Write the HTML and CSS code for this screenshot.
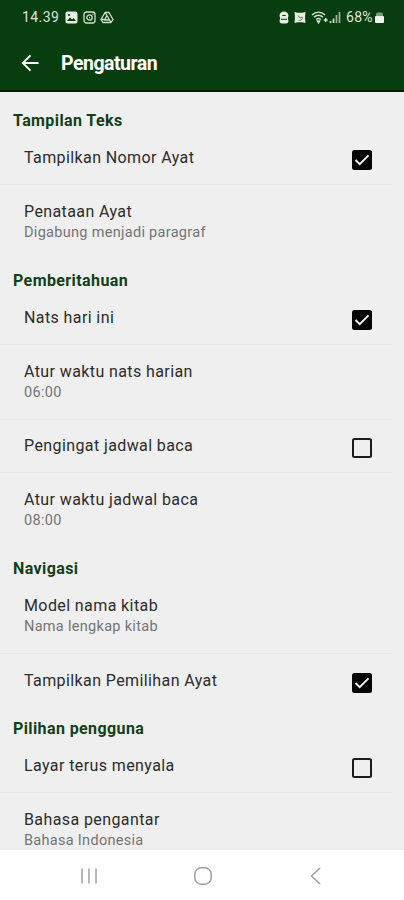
FILE: index.html
```html
<!DOCTYPE html>
<html lang="id">
<head>
    <meta charset="UTF-8">
    <meta name="viewport" content="width=device-width, initial-scale=1.0">
    <title>Pengaturan</title>
    <link rel="stylesheet" href="styles.css">
</head>
<body>
    <header class="header">
        <div class="status-bar">
            <span class="clock">14.39</span>
            <svg class="status-icon" width="13" height="13" viewBox="0 0 13 13">
                <rect x="0.5" y="0.5" width="12" height="12" rx="2" fill="#e6f0e2"/>
                <path d="M2 10l3-3.5 2 2 1.5-1.5 2.5 3z" fill="#083d10"/>
                <circle cx="4" cy="4" r="1.1" fill="#083d10"/>
            </svg>
            <svg class="status-icon" width="13" height="13" viewBox="0 0 13 13" fill="none" stroke="#d3e0cf" stroke-width="1.3">
                <rect x="1" y="1" width="11" height="11" rx="2.5"/>
                <circle cx="6.5" cy="6.5" r="2.7"/>
                <path d="M9.5 3.2h1M6 6.5h1"/>
            </svg>
            <svg class="status-icon" width="14" height="13" viewBox="0 0 14 13" fill="none" stroke="#d3e0cf" stroke-width="1.3" stroke-linejoin="round">
                <path d="M5 1.5h4l4 7-2 3H3l-2-3z"/>
                <path d="M7 4.5L4.5 9h5zM5 1.5l2 3M1 8.5h3.5M11 11.5L9.5 9"/>
            </svg>
            <div class="status-right">
                <svg width="10" height="13" viewBox="0 0 10 13">
                    <path d="M.5 5C.5 2 2.500 .5 5 .5s4.500 1.500 4.500 4.500L8.800 7l.7 3c0 1.500-1 2.500-2.500 2.500H3C1.500 12.500.5 11.500.5 10l.7-3z" fill="#e6f0e2"/>
                    <path d="M3.300 4.500h3.400M2 8.300h6" stroke="#083d10" stroke-width="1.100"/>
                </svg>
                <svg width="12" height="13" viewBox="0 0 12 13">
                    <path d="M.5 1l3 .7h5l3-.7-.4 4v3l.4 4-3-.7h-5l-3 .7.4-4V5z" fill="#e6f0e2"/>
                    <path d="M4 4.500l2 2.500 2.300-1M4.500 9.300c2.500.5 4-.8 4-2.800" stroke="#4d7350" stroke-width=".9" fill="none"/>
                </svg>
                <svg class="wifi" width="18" height="13" viewBox="0 0 18 13" fill="none" stroke="#d3e0cf" stroke-width="1.500">
                    <path d="M1 4C5 .2 10 .2 14 4M3 6.200c3-2.700 6-2.700 9 0M5.200 8.500c1.500-1.300 3.100-1.300 4.600 0"/>
                    <path d="M6.500 10l1 1.800 1-1.800zM14.700 7v4M12.700 9h4"/>
                </svg>
                <svg width="12" height="13" viewBox="0 0 12 13" stroke="#d3e0cf" stroke-width="1.700">
                    <path d="M1.500 12v-2M4.500 12V7.500" />
                    <path d="M7.500 12V4M10.500 12V1" stroke="#9db59a"/>
                </svg>
                <span class="percent">68%</span>
                <svg width="9" height="13" viewBox="0 0 9 13">
                    <rect x="1" y="1.500" width="7" height="5" rx="2" fill="#7e9b7b"/>
                    <rect x="0" y="5" width="9" height="7" rx="1" fill="#edf5ea"/>
                </svg>
            </div>
        </div>
        <div class="toolbar">
            <svg class="back" width="18" height="18" viewBox="0 0 18 18" fill="none" stroke="#fff" stroke-width="1.900">
                <path d="M17.500 9H2M9.500 1.300L1.800 9l7.700 7.700"/>
            </svg>
            <h1>Pengaturan</h1>
        </div>
    </header>

    <main class="settings">
        <h2>Tampilan Teks</h2>
        <div class="item check">
            <p class="title">Tampilkan Nomor Ayat</p>
            <span class="checkbox checked"><svg viewBox="0 0 20 20"><path d="M3.500 10l4.200 4.200 8.800-8.800"/></svg></span>
        </div>
        <div class="item last">
            <p class="title">Penataan Ayat</p>
            <p class="summary">Digabung menjadi paragraf</p>
        </div>

        <h2>Pemberitahuan</h2>
        <div class="item check">
            <p class="title">Nats hari ini</p>
            <span class="checkbox checked"><svg viewBox="0 0 20 20"><path d="M3.500 10l4.200 4.200 8.800-8.800"/></svg></span>
        </div>
        <div class="item">
            <p class="title">Atur waktu nats harian</p>
            <p class="summary">06:00</p>
        </div>
        <div class="item check">
            <p class="title">Pengingat jadwal baca</p>
            <span class="checkbox"></span>
        </div>
        <div class="item last">
            <p class="title">Atur waktu jadwal baca</p>
            <p class="summary">08:00</p>
        </div>

        <h2>Navigasi</h2>
        <div class="item">
            <p class="title">Model nama kitab</p>
            <p class="summary">Nama lengkap kitab</p>
        </div>
        <div class="item check last">
            <p class="title">Tampilkan Pemilihan Ayat</p>
            <span class="checkbox checked"><svg viewBox="0 0 20 20"><path d="M3.500 10l4.200 4.200 8.800-8.800"/></svg></span>
        </div>

        <h2>Pilihan pengguna</h2>
        <div class="item check">
            <p class="title">Layar terus menyala</p>
            <span class="checkbox"></span>
        </div>
        <div class="item last">
            <p class="title">Bahasa pengantar</p>
            <p class="summary">Bahasa Indonesia</p>
        </div>
    </main>

    <nav class="nav-bar">
        <svg width="18" height="18" viewBox="0 0 18 18" stroke="#a0a0a0" stroke-width="1.500">
            <path d="M2 1.500v15M9 1.500v15M16 1.500v15"/>
        </svg>
        <svg width="20" height="20" viewBox="0 0 20 20" fill="none" stroke="#a0a0a0" stroke-width="1.500">
            <rect x="1.800" y="1.800" width="16.400" height="16.400" rx="6.500"/>
        </svg>
        <svg width="18" height="18" viewBox="0 0 18 18" fill="none" stroke="#a0a0a0" stroke-width="1.500">
            <path d="M13 1L4.500 9l8.500 8"/>
        </svg>
    </nav>
</body>
</html>
```
FILE: styles.css
```css
* {
    margin: 0;
    padding: 0;
    box-sizing: border-box;
}
body {
    display: flex;
    flex-direction: column;
    height: 900px;
    overflow: hidden;
    font-family: Roboto, sans-serif;
    background-color: #efefef;
    color: #2c2c2c;
}
svg {
    display: block;
    flex-shrink: 0;
}

/* Header */
.header {
    height: 92px;
    flex-shrink: 0;
    background-color: #083d10;
    border-bottom: 2px solid #051c07;
    color: #fff;
}
.status-bar {
    display: flex;
    align-items: center;
    height: 34px;
    padding: 0 20px 0 22px;
    font-size: 14px;
    color: #dbe7d7;
}
.clock {
    width: 38px;
    margin-right: 5px;
    letter-spacing: 0.4px;
}
.status-icon {
    margin-right: 4.5px;
}
.status-right {
    display: flex;
    align-items: center;
    margin-left: auto;
}
.status-right svg:nth-child(2) {
    margin-left: 5px;
}
.wifi {
    margin-left: 5px;
}
.percent {
    width: 29px;
    margin-left: 5px;
    letter-spacing: 0.3px;
}
.toolbar {
    display: flex;
    align-items: center;
    height: 58px;
    padding-left: 21px;
}
.toolbar h1 {
    margin-left: 22px;
    font-size: 19.5px;
    font-weight: 700;
    letter-spacing: -0.5px;
}

/* Settings list */
.settings {
    flex: 1;
    min-height: 0;
    padding-top: 7.6px;
    overflow: hidden;
}
.settings h2 {
    height: 31.6px;
    padding: 11.4px 13px 0;
    font-size: 16px;
    font-weight: 700;
    line-height: 20px;
    letter-spacing: 0.4px;
    color: #123f1a;
}
.item {
    height: 74.7px;
    margin-right: 12px;
    padding: 16.9px 0 0 24px;
    border-bottom: 1px solid #e8e8e8;
}
.item.last {
    border-bottom-color: transparent;
}
.check {
    display: flex;
    justify-content: space-between;
    height: 53.7px;
    padding-right: 20px;
}
.title {
    font-size: 16px;
    line-height: 20px;
    letter-spacing: 0.4px;
}
.summary {
    margin-top: 1px;
    font-size: 14.5px;
    line-height: 20px;
    letter-spacing: 0.3px;
    color: #747474;
}
.checkbox {
    width: 20px;
    height: 20px;
    margin-top: 1.8px;
    border: 2px solid #1c1c1c;
    border-radius: 2.5px;
}
.checkbox.checked {
    border: none;
    background-color: #050505;
}
.checkbox path {
    fill: none;
    stroke: #efefef;
    stroke-width: 2;
}

/* Bottom navigation */
.nav-bar {
    display: flex;
    flex: 0 0 50px;
    align-items: center;
    justify-content: space-between;
    padding: 2px 79px 0 80px;
    background-color: #fefefe;
}
```
